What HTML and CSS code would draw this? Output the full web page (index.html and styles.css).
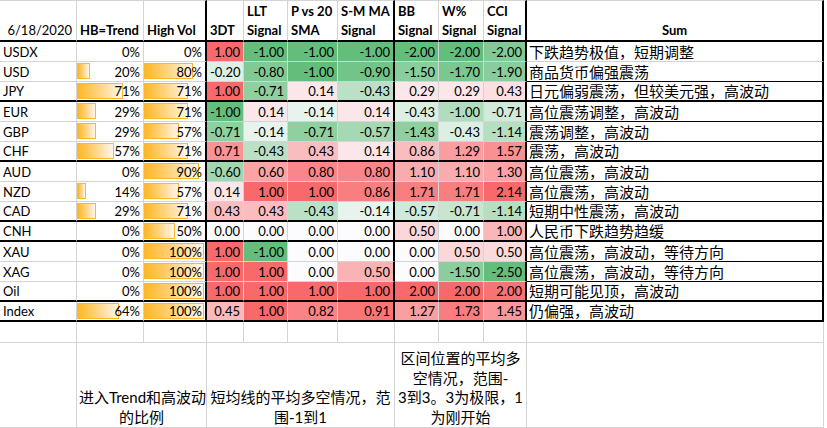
FILE: index.html
```html
<!DOCTYPE html>
<html lang="zh-CN">
<head>
<meta charset="utf-8">
<title>6/18/2020 Signals</title>
<link rel="stylesheet" href="styles.css">
</head>
<body>
<table class="sheet">
  <colgroup>
    <col class="c-a"><col class="c-b"><col class="c-c"><col class="c-d"><col class="c-e"><col class="c-f"><col class="c-g"><col class="c-h"><col class="c-i"><col class="c-j"><col class="c-k">
  </colgroup>
  <thead>
    <tr class="head">
      <th class="date">6/18/2020</th>
      <th>HB=Trend</th>
      <th>High Vol</th>
      <th>3DT</th>
      <th>LLT<br>Signal</th>
      <th>P vs 20<br>SMA</th>
      <th>S-M MA<br>Signal</th>
      <th>BB<br>Signal</th>
      <th>W%<br>Signal</th>
      <th>CCI<br>Signal</th>
      <th class="sumh">Sum</th>
    </tr>
  </thead>
  <tbody class="main">
    <tr class="first">
      <td>USDX</td>
      <td class="pc"><span class="t">0%</span></td>
      <td class="pc"><span class="t">0%</span></td>
      <td class="n r" style="--p:100%">1.00</td>
      <td class="n g" style="--p:100%">-1.00</td>
      <td class="n g" style="--p:100%">-1.00</td>
      <td class="n g" style="--p:100%">-1.00</td>
      <td class="n g" style="--p:100%">-2.00</td>
      <td class="n g" style="--p:100%">-2.00</td>
      <td class="n g" style="--p:80%">-2.00</td>
      <td class="sum">下跌趋势极值，短期调整</td>
    </tr>
    <tr>
      <td>USD</td>
      <td class="pc"><span class="bar" style="--w:13px"></span><span class="t">20%</span></td>
      <td class="pc"><span class="bar" style="--w:49px"></span><span class="t">80%</span></td>
      <td class="n g" style="--p:20%">-0.20</td>
      <td class="n g" style="--p:80%">-0.80</td>
      <td class="n g" style="--p:100%">-1.00</td>
      <td class="n g" style="--p:90%">-0.90</td>
      <td class="n g" style="--p:75%">-1.50</td>
      <td class="n g" style="--p:85%">-1.70</td>
      <td class="n g" style="--p:76%">-1.90</td>
      <td class="sum">商品货币偏强震荡</td>
    </tr>
    <tr class="tb">
      <td>JPY</td>
      <td class="pc"><span class="bar" style="--w:46px"></span><span class="t">71%</span></td>
      <td class="pc"><span class="bar" style="--w:44px"></span><span class="t">71%</span></td>
      <td class="n r" style="--p:100%">1.00</td>
      <td class="n g" style="--p:71%">-0.71</td>
      <td class="n r" style="--p:14%">0.14</td>
      <td class="n g" style="--p:43%">-0.43</td>
      <td class="n r" style="--p:14.5%">0.29</td>
      <td class="n r" style="--p:14.5%">0.29</td>
      <td class="n r" style="--p:20%">0.43</td>
      <td class="sum">日元偏弱震荡，但较美元强，高波动</td>
    </tr>
    <tr>
      <td>EUR</td>
      <td class="pc"><span class="bar" style="--w:19px"></span><span class="t">29%</span></td>
      <td class="pc"><span class="bar" style="--w:44px"></span><span class="t">71%</span></td>
      <td class="n g" style="--p:100%">-1.00</td>
      <td class="n r" style="--p:14%">0.14</td>
      <td class="n g" style="--p:14%">-0.14</td>
      <td class="n r" style="--p:14%">0.14</td>
      <td class="n g" style="--p:21.5%">-0.43</td>
      <td class="n g" style="--p:50%">-1.00</td>
      <td class="n g" style="--p:28%">-0.71</td>
      <td class="sum">高位震荡调整，高波动</td>
    </tr>
    <tr>
      <td>GBP</td>
      <td class="pc"><span class="bar" style="--w:19px"></span><span class="t">29%</span></td>
      <td class="pc"><span class="bar" style="--w:35px"></span><span class="t">57%</span></td>
      <td class="n g" style="--p:71%">-0.71</td>
      <td class="n g" style="--p:14%">-0.14</td>
      <td class="n g" style="--p:71%">-0.71</td>
      <td class="n g" style="--p:57%">-0.57</td>
      <td class="n g" style="--p:71.5%">-1.43</td>
      <td class="n g" style="--p:21.5%">-0.43</td>
      <td class="n g" style="--p:46%">-1.14</td>
      <td class="sum">震荡调整，高波动</td>
    </tr>
    <tr class="tb">
      <td>CHF</td>
      <td class="pc"><span class="bar" style="--w:37px"></span><span class="t">57%</span></td>
      <td class="pc"><span class="bar" style="--w:44px"></span><span class="t">71%</span></td>
      <td class="n r" style="--p:71%">0.71</td>
      <td class="n g" style="--p:43%">-0.43</td>
      <td class="n r" style="--p:43%">0.43</td>
      <td class="n r" style="--p:14%">0.14</td>
      <td class="n r" style="--p:43%">0.86</td>
      <td class="n r" style="--p:64.5%">1.29</td>
      <td class="n r" style="--p:73%">1.57</td>
      <td class="sum">震荡，高波动</td>
    </tr>
    <tr>
      <td>AUD</td>
      <td class="pc"><span class="t">0%</span></td>
      <td class="pc"><span class="bar" style="--w:55px"></span><span class="t">90%</span></td>
      <td class="n g" style="--p:60%">-0.60</td>
      <td class="n r" style="--p:60%">0.60</td>
      <td class="n r" style="--p:80%">0.80</td>
      <td class="n r" style="--p:80%">0.80</td>
      <td class="n r" style="--p:55%">1.10</td>
      <td class="n r" style="--p:55%">1.10</td>
      <td class="n r" style="--p:61%">1.30</td>
      <td class="sum">高位震荡，高波动</td>
    </tr>
    <tr>
      <td>NZD</td>
      <td class="pc"><span class="bar" style="--w:9px"></span><span class="t">14%</span></td>
      <td class="pc"><span class="bar" style="--w:35px"></span><span class="t">57%</span></td>
      <td class="n r" style="--p:14%">0.14</td>
      <td class="n r" style="--p:100%">1.00</td>
      <td class="n r" style="--p:100%">1.00</td>
      <td class="n r" style="--p:86%">0.86</td>
      <td class="n r" style="--p:85.5%">1.71</td>
      <td class="n r" style="--p:85.5%">1.71</td>
      <td class="n r" style="--p:100%">2.14</td>
      <td class="sum">高位震荡，高波动</td>
    </tr>
    <tr class="tb">
      <td>CAD</td>
      <td class="pc"><span class="bar" style="--w:19px"></span><span class="t">29%</span></td>
      <td class="pc"><span class="bar" style="--w:44px"></span><span class="t">71%</span></td>
      <td class="n r" style="--p:43%">0.43</td>
      <td class="n r" style="--p:43%">0.43</td>
      <td class="n g" style="--p:43%">-0.43</td>
      <td class="n g" style="--p:14%">-0.14</td>
      <td class="n g" style="--p:28.5%">-0.57</td>
      <td class="n g" style="--p:35.5%">-0.71</td>
      <td class="n g" style="--p:46%">-1.14</td>
      <td class="sum">短期中性震荡，高波动</td>
    </tr>
    <tr class="tb">
      <td>CNH</td>
      <td class="pc"><span class="t">0%</span></td>
      <td class="pc"><span class="bar" style="--w:31px"></span><span class="t">50%</span></td>
      <td class="n z">0.00</td>
      <td class="n z">0.00</td>
      <td class="n z">0.00</td>
      <td class="n z">0.00</td>
      <td class="n r" style="--p:25%">0.50</td>
      <td class="n z">0.00</td>
      <td class="n r" style="--p:47%">1.00</td>
      <td class="sum">人民币下跌趋势趋缓</td>
    </tr>
    <tr>
      <td>XAU</td>
      <td class="pc"><span class="t">0%</span></td>
      <td class="pc"><span class="bar" style="--w:60px"></span><span class="t">100%</span></td>
      <td class="n r" style="--p:100%">1.00</td>
      <td class="n g" style="--p:100%">-1.00</td>
      <td class="n z">0.00</td>
      <td class="n z">0.00</td>
      <td class="n z">0.00</td>
      <td class="n r" style="--p:25%">0.50</td>
      <td class="n r" style="--p:23%">0.50</td>
      <td class="sum">高位震荡，高波动，等待方向</td>
    </tr>
    <tr>
      <td>XAG</td>
      <td class="pc"><span class="t">0%</span></td>
      <td class="pc"><span class="bar" style="--w:60px"></span><span class="t">100%</span></td>
      <td class="n r" style="--p:100%">1.00</td>
      <td class="n r" style="--p:100%">1.00</td>
      <td class="n z">0.00</td>
      <td class="n r" style="--p:50%">0.50</td>
      <td class="n z">0.00</td>
      <td class="n g" style="--p:75%">-1.50</td>
      <td class="n g" style="--p:100%">-2.50</td>
      <td class="sum">高位震荡，高波动，等待方向</td>
    </tr>
    <tr class="tb">
      <td>Oil</td>
      <td class="pc"><span class="t">0%</span></td>
      <td class="pc"><span class="bar" style="--w:60px"></span><span class="t">100%</span></td>
      <td class="n r" style="--p:100%">1.00</td>
      <td class="n r" style="--p:100%">1.00</td>
      <td class="n r" style="--p:100%">1.00</td>
      <td class="n r" style="--p:100%">1.00</td>
      <td class="n r" style="--p:100%">2.00</td>
      <td class="n r" style="--p:100%">2.00</td>
      <td class="n r" style="--p:93%">2.00</td>
      <td class="sum">短期可能见顶，高波动</td>
    </tr>
    <tr class="tb">
      <td>Index</td>
      <td class="pc"><span class="bar" style="--w:42px"></span><span class="t">64%</span></td>
      <td class="pc"><span class="bar" style="--w:60px"></span><span class="t">100%</span></td>
      <td class="n r" style="--p:45%">0.45</td>
      <td class="n r" style="--p:100%">1.00</td>
      <td class="n r" style="--p:82%">0.82</td>
      <td class="n r" style="--p:91%">0.91</td>
      <td class="n r" style="--p:63.5%">1.27</td>
      <td class="n r" style="--p:86.5%">1.73</td>
      <td class="n r" style="--p:68%">1.45</td>
      <td class="sum">仍偏强，高波动</td>
    </tr>
  </tbody>
  <tbody class="notes">
    <tr class="blank">
      <td></td><td></td><td></td><td></td><td></td><td></td><td></td><td></td><td></td><td></td><td></td>
    </tr>
    <tr class="note">
      <td></td>
      <td colspan="2">进入Trend和高波动<br>的比例</td>
      <td colspan="4">短均线的平均多空情况，范<br>围-1到1</td>
      <td colspan="3">区间位置的平均多<br>空情况，范围-<br>3到3。3为极限，1<br>为刚开始</td>
      <td></td>
    </tr>
  </tbody>
</table>
</body>
</html>
```
FILE: styles.css
```css
* { box-sizing: border-box; }
html, body { margin: 0; padding: 0; background: #ffffff; }
body {
  font-family: Lato, "Noto Sans CJK SC", sans-serif;
  font-size: 13px;
  color: #000000;
}
.sheet {
  border-collapse: separate;
  border-spacing: 0;
  table-layout: fixed;
  width: 824px;
}
.c-a { width: 77px; }
.c-b { width: 67px; }
.c-c { width: 63px; }
.c-d { width: 37px; }
.c-e { width: 44px; }
.c-f { width: 50px; }
.c-g { width: 57px; }
.c-h { width: 44px; }
.c-i { width: 45px; }
.c-j { width: 43px; }
.c-k { width: 297px; }

.sheet th, .sheet td {
  border: 0;
  border-right: 1px solid #d4d4d4;
  border-bottom: 1px solid #d4d4d4;
  padding: 0 3px;
  vertical-align: bottom;
  line-height: 18px;
  white-space: nowrap;
  overflow: hidden;
}
.main tr { height: 20px; }
.head { height: 42px; }
.head th {
  border-top: 1px solid #d4d4d4;
  border-bottom: 2px solid #000000;
  font-weight: 700;
  text-align: left;
  line-height: 19px;
  padding-bottom: 0;
}
.head th.date { font-weight: 400; text-align: right; padding-right: 4px; }
.head th.sumh { text-align: center; }

.head th:nth-child(3), .head th:nth-child(7), .head th:nth-child(10), .head th:nth-child(11),
.main td:nth-child(3), .main td:nth-child(7), .main td:nth-child(10), .main td:nth-child(11) {
  border-right: 2px solid #000000;
}
.main td.sum { border-bottom-color: #000000; font-size: 15px; padding-left: 2px; }
.main tr.first td.sum { border-bottom-color: #d4d4d4; }
.main tr.tb td { border-bottom: 2px solid #000000; }

.n { text-align: right; }
.r { background: color-mix(in srgb, #f8696b var(--p), #fcfcff); }
.g { background: color-mix(in srgb, #63be7b var(--p), #fcfcff); }
.z { background: #fcfcff; }

.pc { position: relative; text-align: right; padding-right: 4px; }
.pc .t { position: relative; }
.bar {
  position: absolute;
  left: 0;
  top: 1px;
  height: 16px;
  width: var(--w);
  border: 1px solid #ffb628;
  background: linear-gradient(to right, #ffb628 0%, #ffd27a 45%, #fff7ea 100%);
}

.blank { height: 21px; }
.note { height: 85px; }
.note td {
  text-align: center;
  font-size: 15px;
  line-height: 19.5px;
  padding: 0 2px;
}
```
